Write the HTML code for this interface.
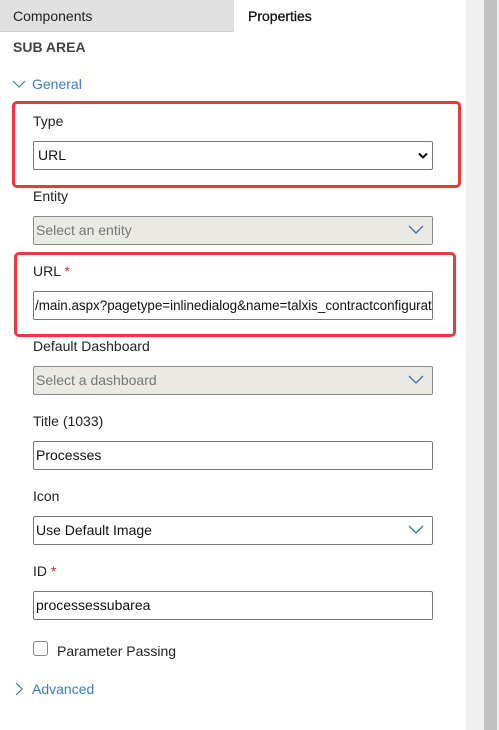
<!DOCTYPE html>
<html><head><style>
body{margin:0;width:499px;height:730px;background:#fff;font-family:"Liberation Sans",sans-serif;font-size:14px;color:#222;position:relative;overflow:hidden}
.a{position:absolute}
.lbl{position:absolute;left:33px;font-size:14px;color:#222;line-height:16px}
.in{position:absolute;left:33px;width:396px;height:27px;border:1px solid #777;border-radius:2px;background:#fff;line-height:27px;padding-left:2px;box-sizing:content-box;overflow:hidden;white-space:nowrap;font-size:14px;color:#111}
.dis{background:#eae9e3;color:#777;border-color:#8a8a8a}
.chev{position:absolute;right:8px;top:8px}
.red{position:absolute;border:3px solid #e8393c;border-radius:5px}
.star{color:#d22}
</style></head><body>
<div class="a" style="left:0;top:0;width:234px;height:31px;background:#e0e0e0;border-bottom:1px solid #d0d0d0"></div>
<div class="a" style="left:13px;top:8px;font-size:14px;color:#222">Components</div>
<div class="a" style="left:248px;top:8px;font-size:14px;color:#111;-webkit-text-stroke:0.3px #111">Properties</div>
<div class="a" style="left:466px;top:0;width:18px;height:730px;background:#f0f0f0"></div>
<div class="a" style="left:484px;top:0;width:13px;height:730px;background:#c1c1c1"></div>
<div class="a" style="left:497px;top:0;width:2px;height:730px;background:#f0f0f0"></div>
<div class="a" style="left:13px;top:39px;font-size:14px;font-weight:bold;color:#444">SUB AREA</div>
<svg class="a" style="left:12px;top:78px" width="14" height="12"><path d="M1 3 L7 9 L13 3" fill="none" stroke="#3a7bc8" stroke-width="1.2"/></svg>
<div class="a" style="left:32px;top:76px;color:#3a7bc8">General</div>

<div class="red" style="left:12px;top:101px;width:443px;height:81px"></div>
<div class="lbl" style="top:113px">Type</div>
<div class="in" style="top:141px;padding-left:4px;width:394px">URL<svg class="chev" style="top:10px;right:4px" width="10" height="8"><path d="M1 1.5 L5 5.5 L9 1.5" fill="none" stroke="#111" stroke-width="2"/></svg></div>

<div class="lbl" style="top:188px">Entity</div>
<div class="in dis" style="top:216px">Select an entity<svg class="chev" width="16" height="10"><path d="M1 1 L8 8 L15 1" fill="none" stroke="#3a6fb0" stroke-width="1.3"/></svg></div>

<div class="red" style="left:14px;top:252px;width:436px;height:79px"></div>
<div class="lbl" style="top:263px">URL <span class="star">*</span></div>
<div class="in" style="top:291px;font-size:13.4px;padding-left:1px;width:397px">/main.aspx?pagetype=inlinedialog&amp;name=talxis_contractconfigurat</div>

<div class="lbl" style="top:338px">Default Dashboard</div>
<div class="in dis" style="top:366px">Select a dashboard<svg class="chev" width="16" height="10"><path d="M1 1 L8 8 L15 1" fill="none" stroke="#3a6fb0" stroke-width="1.3"/></svg></div>

<div class="lbl" style="top:413px">Title (1033)</div>
<div class="in" style="top:441px">Processes</div>

<div class="lbl" style="top:488px">Icon</div>
<div class="in" style="top:516px">Use Default Image<svg class="chev" width="16" height="10"><path d="M1 1 L8 8 L15 1" fill="none" stroke="#3a6fb0" stroke-width="1.3"/></svg></div>

<div class="lbl" style="top:563px">ID <span class="star">*</span></div>
<div class="in" style="top:591px">processessubarea</div>

<div class="a" style="left:33px;top:641px;width:13px;height:13px;border:1px solid #888;border-radius:3px"></div>
<div class="a" style="left:57px;top:643px">Parameter Passing</div>

<svg class="a" style="left:14px;top:682px" width="10" height="14"><path d="M2 1 L8 7 L2 13" fill="none" stroke="#3a7bc8" stroke-width="1.2"/></svg>
<div class="a" style="left:32px;top:681px;color:#3a7bc8">Advanced</div>
</body></html>
